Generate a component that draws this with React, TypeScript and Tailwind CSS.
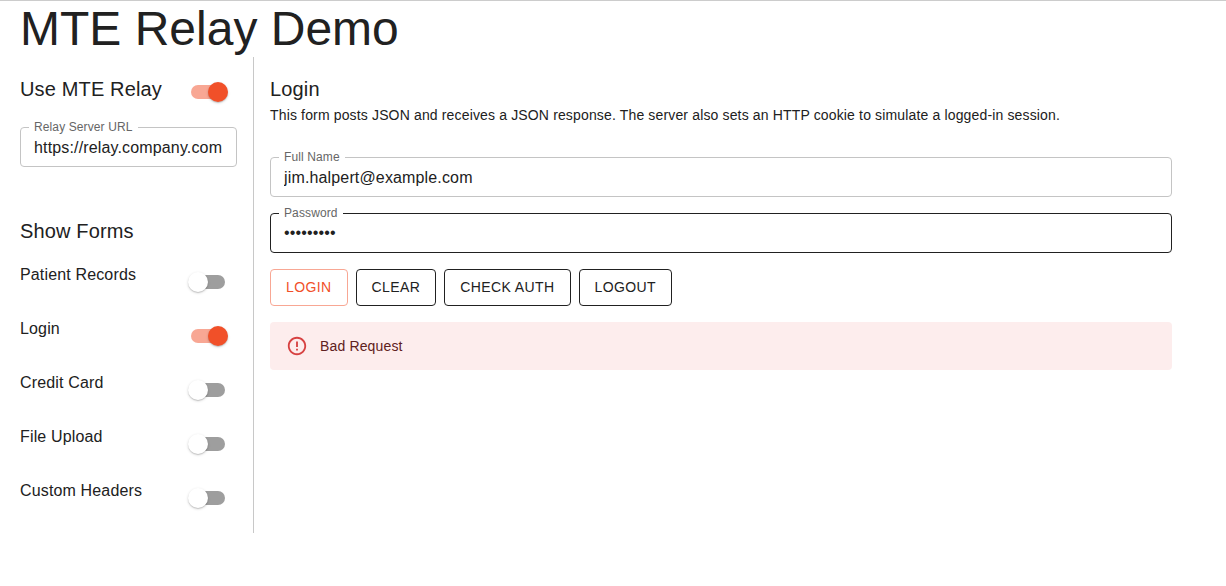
import { useState, type ReactNode } from "react";

function Switch({ label, initial }: { label: string; initial: boolean }) {
  const [on, setOn] = useState(initial);
  return (
    <button
      type="button"
      role="switch"
      aria-checked={on}
      aria-label={label}
      onClick={() => setOn(!on)}
      className="relative flex h-[38px] w-[58px] shrink-0 p-3"
    >
      <span className={on ? "h-3.5 w-full rounded-full bg-[#f15029]/50" : "h-3.5 w-full rounded-full bg-black/38"} />
      <span
        className={`absolute top-[9px] size-5 rounded-full shadow-[0px_1px_1px_0px_rgba(0,0,0,0.14),0px_1px_3px_0px_rgba(0,0,0,0.16)] ${
          on ? "left-[29px] bg-[#f15029]" : "left-[9px] bg-white"
        }`}
      />
    </button>
  );
}

function Field({
  label,
  value,
  type = "text",
  active = false,
}: {
  label: string;
  value: string;
  type?: string;
  active?: boolean;
}) {
  return (
    <fieldset
      className={`h-10 w-full min-w-0 rounded border pl-2 ${active ? "border-[#212121]" : "border-[#c4c4c4]"}`}
    >
      <legend className="h-px px-[5px] text-xs leading-[0px] tracking-[0.00938em] whitespace-nowrap text-[#666666]">
        {label}
      </legend>
      <input
        type={type}
        defaultValue={value}
        aria-label={label}
        className={`block h-[23px] w-full bg-transparent pr-3 pl-[5px] tracking-[0.00938em] outline-none ${
          type === "password" ? "mt-[7.5px]" : "mt-[8.5px]"
        }`}
      />
    </fieldset>
  );
}

function Heading({ children }: { children: ReactNode }) {
  return <h2 className="text-xl leading-8 tracking-[0.0075em]">{children}</h2>;
}

function ActionButton({ children, primary = false }: { children: ReactNode; primary?: boolean }) {
  return (
    <button
      type="button"
      className={`rounded border px-[15px] py-[5px] text-sm leading-[24.5px] tracking-[0.02857em] uppercase ${
        primary ? "border-[#f8a794] text-[#f15029]" : "border-[#212121] text-[#212121]"
      }`}
    >
      {children}
    </button>
  );
}

const forms = [
  { name: "Patient Records", shown: false },
  { name: "Login", shown: true },
  { name: "Credit Card", shown: false },
  { name: "File Upload", shown: false },
  { name: "Custom Headers", shown: false },
];

export default function App() {
  return (
    <div className="min-h-screen border-t border-[#cccccc] bg-white pl-5 font-['Liberation_Sans',Arial,sans-serif] text-[#212121]">
      <h1 className="text-5xl leading-[56px]">MTE Relay Demo</h1>
      <div className="flex">
        <aside className="flex w-[234px] shrink-0 flex-col gap-4 border-r border-[#c8c8c8] py-4 pr-4">
          <div className="flex justify-between">
            <Heading>Use MTE Relay</Heading>
            <Switch label="Use MTE Relay" initial={true} />
          </div>
          <Field label="Relay Server URL" value="https://relay.company.com" />
          <div className="pt-8">
            <Heading>Show Forms</Heading>
          </div>
          {forms.map((form) => (
            <div key={form.name} className="flex justify-between">
              <span className="leading-6 tracking-[0.00938em]">{form.name}</span>
              <Switch label={form.name} initial={form.shown} />
            </div>
          ))}
        </aside>
        <main className="flex w-[934px] flex-col px-4 pt-4">
          <Heading>Login</Heading>
          <p className="text-sm leading-5 tracking-[0.01071em]">
            This form posts JSON and receives a JSON response. The server also sets an HTTP cookie to simulate a
            logged-in session.
          </p>
          <form className="mt-8 flex flex-col gap-4">
            <Field label="Full Name" value="jim.halpert@example.com" />
            <Field label="Password" value="password1" type="password" active />
            <div className="flex gap-2">
              <ActionButton primary>Login</ActionButton>
              <ActionButton>Clear</ActionButton>
              <ActionButton>Check Auth</ActionButton>
              <ActionButton>Logout</ActionButton>
            </div>
          </form>
          <div role="alert" className="mt-4 flex h-12 items-center gap-3 rounded bg-[#fdeded] px-4 text-[#5f2120]">
            <svg viewBox="0 0 24 24" className="size-[22px] fill-[#d32f2f] opacity-90">
              <path d="M11 15h2v2h-2zm0-8h2v6h-2zm.99-5C6.47 2 2 6.48 2 12s4.47 10 9.99 10C17.52 22 22 17.52 22 12S17.52 2 11.99 2zM12 20c-4.42 0-8-3.58-8-8s3.58-8 8-8 8 3.58 8 8-3.58 8-8 8z" />
            </svg>
            <span className="text-sm leading-5 tracking-[0.01071em]">Bad Request</span>
          </div>
        </main>
      </div>
    </div>
  );
}
